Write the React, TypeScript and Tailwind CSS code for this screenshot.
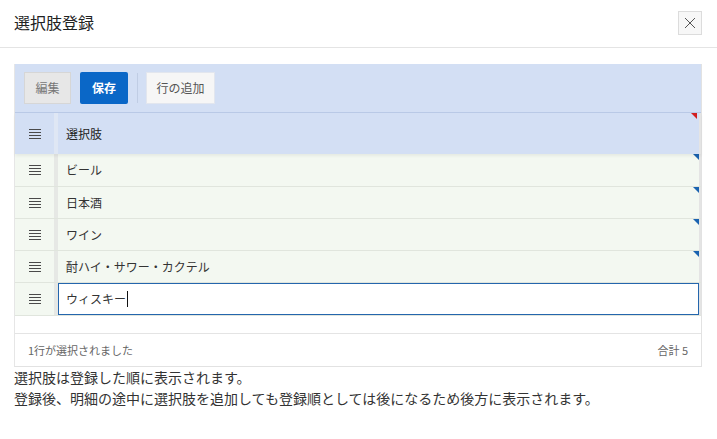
import React from "react";

const font = { fontFamily: '"Noto Sans CJK JP", "Noto Sans", sans-serif' };

function Grip() {
  return (
    <svg width="12" height="10" viewBox="0 0 12 10" className="block">
      <g stroke="#4a4a4a" strokeWidth="1">
        <line x1="0" y1="0.5" x2="12" y2="0.5" />
        <line x1="0" y1="3.5" x2="12" y2="3.5" />
        <line x1="0" y1="6.5" x2="12" y2="6.5" />
        <line x1="0" y1="9.5" x2="12" y2="9.5" />
      </g>
    </svg>
  );
}

function Corner({ color }: { color: string }) {
  return (
    <span
      className="absolute right-0 top-0 h-0 w-0"
      style={{ borderTop: `6px solid ${color}`, borderLeft: "6px solid transparent" }}
    />
  );
}

const rows = ["ビール", "日本酒", "ワイン", "酎ハイ・サワー・カクテル"];

export default function App() {
  return (
    <div className="w-[717px] h-[439px] bg-white text-[#333]" style={font}>
      <div className="flex h-[48px] items-center justify-between border-b border-[#e4e4e4] pl-[14px] pr-[15px]">
        <div className="text-[16px] text-[#222] leading-none pb-[3px]">選択肢登録</div>
        <button className="flex h-[24px] w-[24px] items-center justify-center border border-[#dcdcdc] bg-[#f7f7f7] mb-[1px]">
          <svg width="12" height="12" viewBox="0 0 12 12">
            <path d="M1 1L11 11M11 1L1 11" stroke="#555" strokeWidth="1" />
          </svg>
        </button>
      </div>
      <div className="pl-[14px] pr-[15px] pt-[16px]">
        <div className="border border-[#e2e2e2] border-t-0 border-l-[#e6e6e6]">
          <div className="flex h-[49px] items-center gap-[9px] bg-[#d3dff4] border-b border-[#b9c9e6] pl-[9px]">
            <button className="h-[32px] w-[47px] border border-[#d6d6d6] bg-[#e7e7e7] text-[12px] text-[#777]">編集</button>
            <button className="h-[32px] w-[48px] rounded-[2px] bg-[#0a67c7] text-[12px] font-bold text-white">保存</button>
            <div className="h-[30px] w-px bg-[#c0cde4]" />
            <button className="ml-[-1px] h-[32px] w-[69px] border border-[#e2e6ee] bg-[#f6f6f6] text-[12px] text-[#555]">行の追加</button>
          </div>
          <div className="flex h-[41px] bg-[#d3dff4] shadow-[0_2px_3px_rgba(0,0,0,0.06)] relative z-10">
            <div className="flex w-[39px] items-center justify-center">
              <Grip />
            </div>
            <div className="w-[4px] bg-[#dfe7f4]" />
            <div className="relative flex flex-1 items-center pl-[8px] text-[12px] text-[#222] mr-[2px]">
              選択肢
              <Corner color="#d21f1f" />
            </div>
            <div className="w-[2px] bg-[#e4e4e4]" />
          </div>
          {rows.map((r, i) => (
            <div key={r} className={`flex ${i === 0 ? "h-[33px]" : "h-[32px]"} bg-[#f3f8f1] border-b border-[#e0e5dd]`}>
              <div className="flex w-[39px] items-center justify-center">
                <Grip />
              </div>
              <div className="w-[4px] bg-[#e6e8e5]" />
              <div className="relative flex flex-1 items-center pl-[8px] text-[12px] text-[#333]">
                {r}
                <Corner color="#1a63b0" />
              </div>
              <div className="w-[2px] bg-[#e4e4e4]" />
            </div>
          ))}
          <div className="flex h-[33px] bg-[#f3f8f1] border-b border-[#e0e5dd]">
            <div className="flex w-[39px] items-center justify-center">
              <Grip />
            </div>
            <div className="w-[4px] bg-[#e6e8e5]" />
            <div className="flex flex-1 items-center border border-[#2466ad] bg-white pl-[7px] text-[12px] text-[#333]">
              ウィスキー
              <span className="ml-[1px] inline-block h-[16px] w-px bg-[#111]" />
            </div>
            <div className="w-[2px] bg-[#e4e4e4]" />
          </div>
          <div className="h-[18px] bg-white border-b border-[#e4e4e4]" />
          <div className="flex h-[32px] items-center justify-between px-[13px] text-[11px] text-[#666]">
            <span>1行が選択されました</span>
            <span>合計 5</span>
          </div>
        </div>
        <div className="mt-0 text-[14px] leading-[21px] text-[#333]">
          <div>選択肢は登録した順に表示されます。</div>
          <div>登録後、明細の途中に選択肢を追加しても登録順としては後になるため後方に表示されます。</div>
        </div>
      </div>
    </div>
  );
}
